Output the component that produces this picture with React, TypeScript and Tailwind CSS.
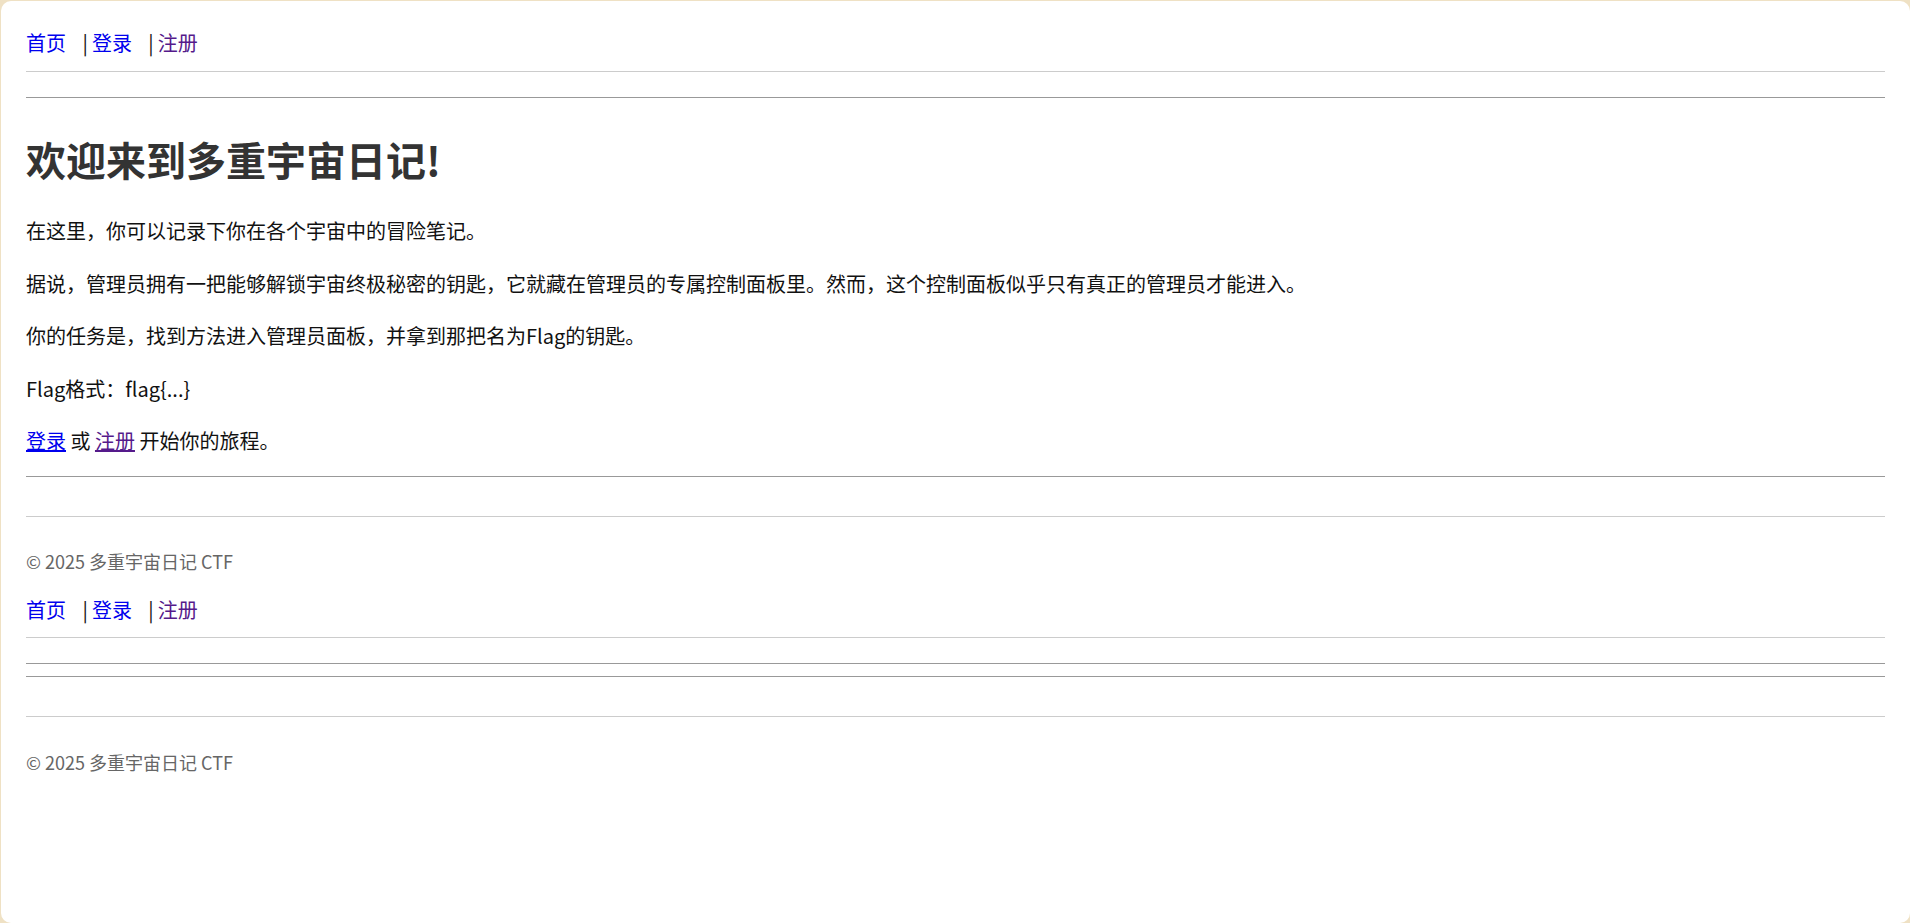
import React from "react";

const font = { fontFamily: '"Noto Sans CJK SC", "Noto Sans", sans-serif' };

const Nav = ({ className }: { className?: string }) => (
  <nav className={"text-[20px] leading-[32px] text-[#111] " + (className ?? "")}>
    <a href="#" className="mr-[12px] text-[#0000ee]">首页</a> |<a href="#" className="ml-[4px] mr-[12px] text-[#0000ee]">登录</a> |<a href="#" className="ml-[4px] text-[#551a8b]">注册</a>
  </nav>
);

const Hr = ({ className }: { className?: string }) => (
  <div className={"h-px bg-[#999999] " + (className ?? "")} />
);

const Footer = ({ className }: { className?: string }) => (
  <footer className={"border-t border-[#cccccc] " + (className ?? "")}>
    <p className="text-[18px] leading-[32px] text-[#666]">© 2025 多重宇宙日记 CTF</p>
  </footer>
);

export default function App() {
  return (
    <div className="min-h-screen bg-[#efe1c4] pl-px pt-px" style={font}>
      <div className="h-[922px] rounded-[10px] bg-white px-[25px] pt-[26px]">
        {/* Header */}
        <header className="border-b border-[#cccccc] pb-[12px]">
          <Nav />
        </header>
        <Hr className="mt-[25px]" />

        {/* Main */}
        <main>
          <h1 className="mt-[37px] text-[40px] font-bold leading-[48px] text-[#333]">欢迎来到多重宇宙日记!</h1>
          <div className="text-[20px] leading-[32.5px] text-[#111]">
            <p className="mt-[32px]">在这里，你可以记录下你在各个宇宙中的冒险笔记。</p>
            <p className="mt-[20px]">据说，管理员拥有一把能够解锁宇宙终极秘密的钥匙，它就藏在管理员的专属控制面板里。然而，这个控制面板似乎只有真正的管理员才能进入。</p>
            <p className="mt-[20px]">你的任务是，找到方法进入管理员面板，并拿到那把名为Flag的钥匙。</p>
            <p className="mt-[20px]">Flag格式：flag{"{...}"}</p>
            <p className="mt-[20px]">
              <a href="#" className="text-[#0000ee] underline">登录</a> 或 <a href="#" className="text-[#551a8b] underline">注册</a> 开始你的旅程。
            </p>
          </div>
        </main>
        <Hr className="mt-[18px]" />

        <Footer className="mt-[39px] pt-[28px]" />

        {/* Nested page */}
        <header className="mt-[17px] border-b border-[#cccccc] pb-[11px]">
          <Nav />
        </header>
        <Hr className="mt-[25px]" />
        <Hr className="mt-[12px]" />
        <Footer className="mt-[39px] pt-[29px]" />
      </div>
    </div>
  );
}
